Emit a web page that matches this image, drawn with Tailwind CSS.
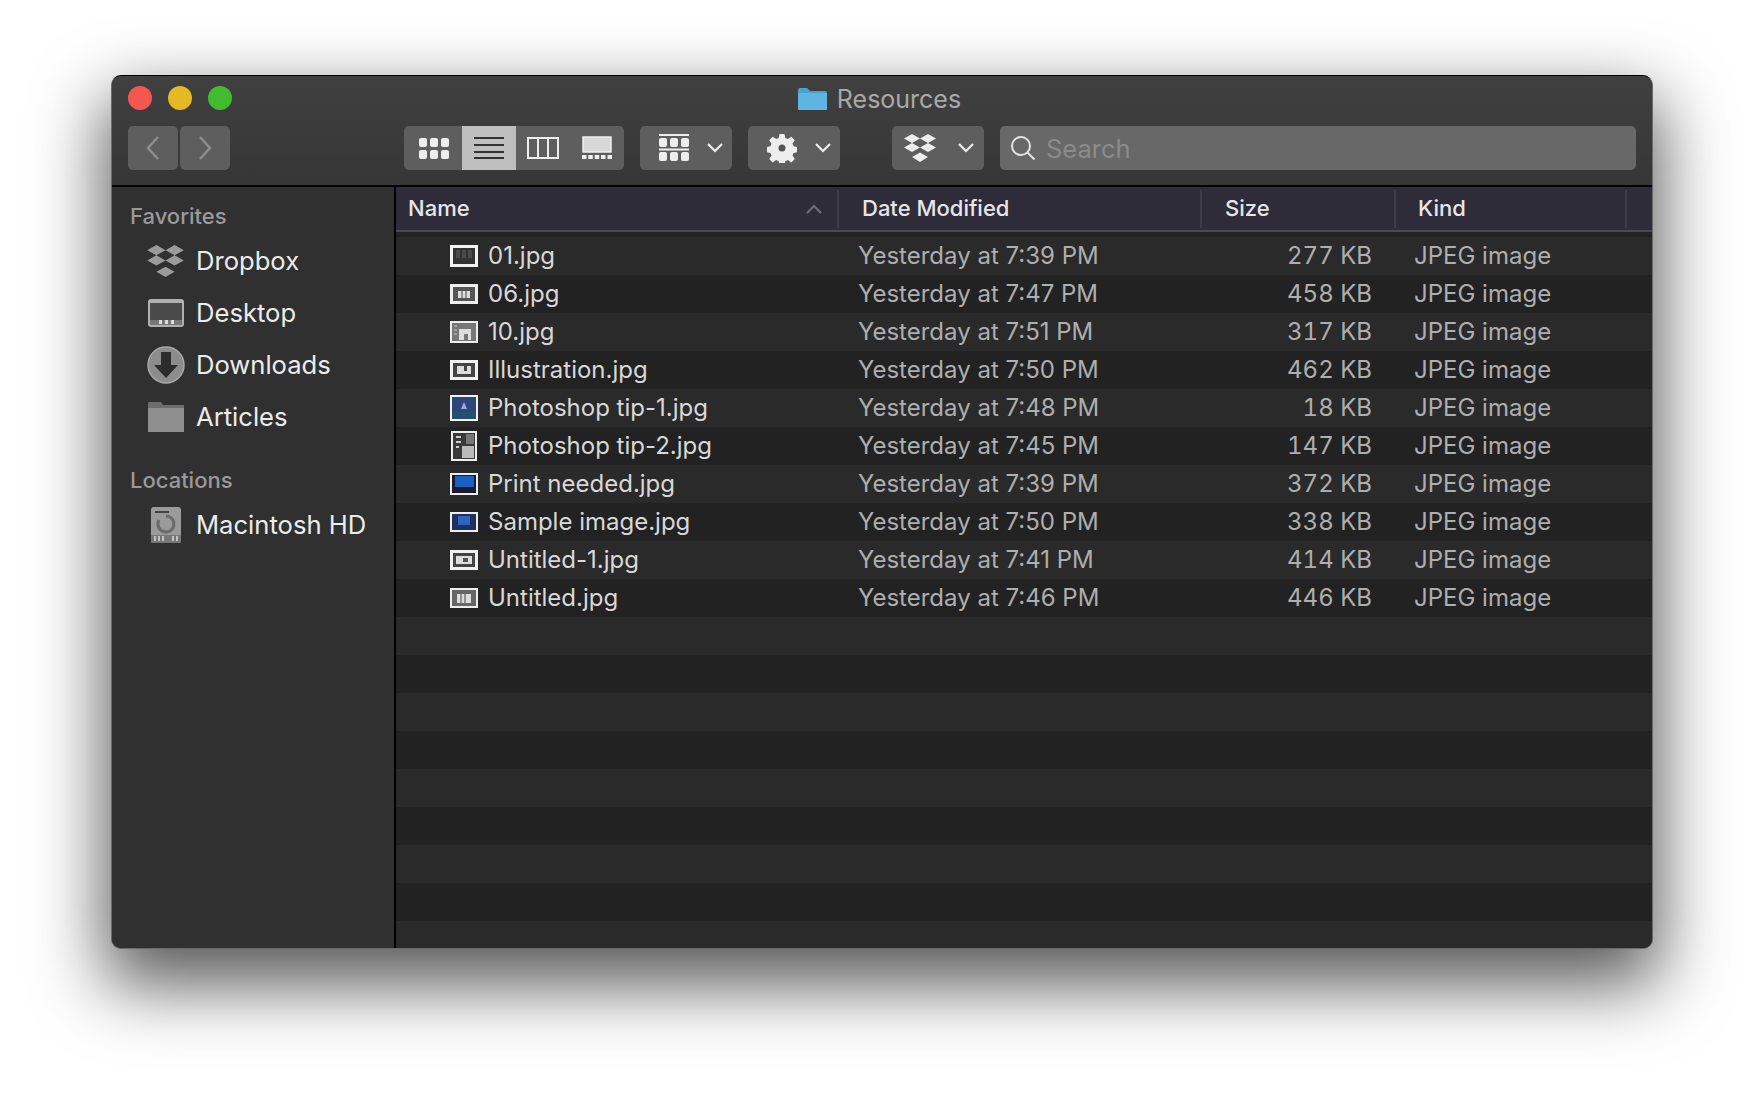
<!DOCTYPE html>
<html lang="en">
<head>
    <meta charset="UTF-8">
    <meta name="viewport" content="width=device-width, initial-scale=1.0">
    <title>Resources</title>
    <script src="https://cdn.jsdelivr.net/npm/@tailwindcss/browser@4"></script>
</head>
<body class="bg-white h-[1096px] overflow-hidden pt-[75px] pl-[111px] font-['Inter','Liberation_Sans',sans-serif]">
    <div class="w-[1542px] h-[874px] rounded-[10px] overflow-hidden flex flex-col border border-[#6a6a6a] border-t-black bg-[#303030] shadow-[0_30px_70px_6px_rgba(0,0,0,0.65)]">

        <!-- title bar and toolbar -->
        <div class="h-[111px] shrink-0 bg-gradient-to-b from-[#404040] to-[#363636] border-b-2 border-black flex flex-col">
            <div class="h-[50px] shrink-0 relative flex items-center justify-center pb-[4px]">
                <div class="absolute left-[16px] top-[10px] flex gap-[16px]">
                    <div class="w-[24px] h-[24px] rounded-full bg-[#f4574f]"></div>
                    <div class="w-[24px] h-[24px] rounded-full bg-[#e5b921]"></div>
                    <div class="w-[24px] h-[24px] rounded-full bg-[#43bb2f]"></div>
                </div>
                <div class="flex items-center gap-[9px] ml-[-6px]">
                    <svg class="w-[31px] h-[24px]" viewBox="0 0 31 24"><path d="M1 3q0-2 2-2h7q1 0 2 2l1 1h15q2 0 2 2v15q0 2-2 2H3q-2 0-2-2z" fill="#4a9fd3"/><rect x="1" y="6" width="29" height="17" rx="1" fill="#5fb4e2"/></svg>
                    <span class="text-[25px] leading-none text-[#a9a9a9]">Resources</span>
                </div>
            </div>
            <div class="flex items-start pl-[16px] pr-[16px]">
                <div class="flex gap-[2px] w-[276px]">
                    <div class="w-[50px] h-[44px] rounded-[5px] bg-[#5e5e5e] flex items-center justify-center">
                        <svg class="w-[16px] h-[26px]" viewBox="0 0 16 26" fill="none" stroke="#8e8e8e" stroke-width="2.4"><path d="M13 2 3 13l10 11"/></svg>
                    </div>
                    <div class="w-[50px] h-[44px] rounded-[5px] bg-[#5e5e5e] flex items-center justify-center">
                        <svg class="w-[16px] h-[26px]" viewBox="0 0 16 26" fill="none" stroke="#8e8e8e" stroke-width="2.4"><path d="m3 2 10 11L3 24"/></svg>
                    </div>
                </div>
                <div class="w-[220px] h-[44px] rounded-[5px] bg-[#5e5e5e] flex overflow-hidden">
                    <div class="w-[58px] flex items-center justify-center pl-[2px]">
                        <svg class="w-[30px] h-[24px]" viewBox="0 0 30 24" fill="#eee"><rect width="8" height="9" y="2" rx="2"/><rect x="11" width="8" height="9" y="2" rx="2"/><rect x="22" width="8" height="9" y="2" rx="2"/><rect width="8" height="9" y="14" rx="2"/><rect x="11" width="8" height="9" y="14" rx="2"/><rect x="22" width="8" height="9" y="14" rx="2"/></svg>
                    </div>
                    <div class="w-[54px] bg-[#bfbfbf] flex items-center justify-center">
                        <svg class="w-[30px] h-[24px]" viewBox="0 0 30 24" stroke="#333" stroke-width="2"><path d="M0 2h30M0 9h30M0 16h30M0 22h30"/></svg>
                    </div>
                    <div class="w-[54px] flex items-center justify-center">
                        <svg class="w-[32px] h-[22px]" viewBox="0 0 32 22" fill="none" stroke="#eee" stroke-width="2"><rect x="1" y="1" width="30" height="20"/><path d="M11 1v20M21 1v20"/></svg>
                    </div>
                    <div class="w-[54px] flex items-center justify-center">
                        <svg class="w-[30px] h-[24px]" viewBox="0 0 30 24"><rect x="1" y="1" width="28" height="15" fill="#d8d8d8" stroke="#eee" stroke-width="1.5"/><g fill="#eee"><rect y="19" width="4.5" height="4"/><rect x="6.3" y="19" width="4.5" height="4"/><rect x="12.7" y="19" width="4.5" height="4"/><rect x="19" y="19" width="4.5" height="4"/><rect x="25.5" y="19" width="4.5" height="4"/></g></svg>
                    </div>
                </div>
                <div class="w-[92px] h-[44px] ml-[16px] rounded-[5px] bg-[#5e5e5e] flex items-center pl-[19px] gap-[18px]">
                    <svg class="w-[30px] h-[30px]" viewBox="0 0 30 30" fill="#eee"><rect y="1" width="30" height="2"/><rect y="5" width="8" height="9" rx="2"/><rect x="11" y="5" width="8" height="9" rx="2"/><rect x="22" y="5" width="8" height="9" rx="2"/><rect y="15.5" width="30" height="2"/><rect y="19" width="8" height="9" rx="2"/><rect x="11" y="19" width="8" height="9" rx="2"/><rect x="22" y="19" width="8" height="9" rx="2"/></svg>
                    <svg class="w-[16px] h-[10px]" viewBox="0 0 16 10" fill="none" stroke="#eee" stroke-width="2.2"><path d="m1 1 7 7 7-7"/></svg>
                </div>
                <div class="w-[92px] h-[44px] ml-[16px] rounded-[5px] bg-[#5e5e5e] flex items-center pl-[19px] gap-[18px]">
                    <svg class="w-[30px] h-[30px]" viewBox="0 0 30 30"><path fill="#eee" d="M12.5 1h5l.8 4 2.6 1.100 3.400-2.300 3.500 3.500-2.300 3.400 1.100 2.600 4 .8v5l-4 .8-1.100 2.600 2.300 3.400-3.500 3.500-3.400-2.300-2.600 1.100-.8 4h-5l-.8-4-2.600-1.100-3.400 2.300-3.500-3.500 2.300-3.400-1.100-2.600-4-.8v-5l4-.8 1.100-2.600-2.300-3.400 3.500-3.500 3.400 2.300 2.600-1.100z"/><circle cx="15" cy="15" r="3.500" fill="#555"/></svg>
                    <svg class="w-[16px] h-[10px]" viewBox="0 0 16 10" fill="none" stroke="#eee" stroke-width="2.2"><path d="m1 1 7 7 7-7"/></svg>
                </div>
                <div class="w-[92px] h-[44px] ml-[52px] rounded-[5px] bg-[#5e5e5e] flex items-center pl-[12px] gap-[22px]">
                    <svg class="w-[32px] h-[28px]" viewBox="0 0 32 28" fill="#eee"><path d="m8 0 8 4.500L8 9 0 4.500zM24 0l8 4.500L24 9l-8-4.500zM8 9l8 4.500L8 18l-8-4.500zM24 9l8 4.500L24 18l-8-4.500zM16 18.500l8 4.500-8 5-8-5z"/></svg>
                    <svg class="w-[16px] h-[10px]" viewBox="0 0 16 10" fill="none" stroke="#eee" stroke-width="2.2"><path d="m1 1 7 7 7-7"/></svg>
                </div>
                <div class="flex-1 h-[44px] ml-[16px] rounded-[5px] bg-[#686868] flex items-center pl-[10px] gap-[10px]">
                    <svg class="w-[26px] h-[26px]" viewBox="0 0 26 26" fill="none" stroke="#e4e4e4" stroke-width="2"><circle cx="11" cy="11" r="9"/><path d="m17.500 17.500 7 7"/></svg>
                    <span class="text-[25.5px] leading-none text-[#8b8b8b] pt-[2px]">Search</span>
                </div>
            </div>
        </div>

        <div class="flex-1 flex min-h-0">
            <!-- sidebar -->
            <div class="w-[284px] shrink-0 bg-[#303030] border-r-2 border-black pt-[16px] pl-[18px]">
                <div class="text-[22px] leading-[26px] font-medium text-[#9a9a9a]">Favorites</div>
                <div class="mt-[13px] flex flex-col gap-[14px]">
                    <div class="h-[38px] flex items-center gap-[11px] pl-[17px]">
                        <svg class="w-[37px] h-[32px]" viewBox="0 0 32 28" fill="#9b9b9b"><path d="m8 0 8 4.500L8 9 0 4.500zM24 0l8 4.500L24 9l-8-4.500zM8 9l8 4.500L8 18l-8-4.500zM24 9l8 4.500L24 18l-8-4.500zM16 19l8 4.500-8 4.500-8-4.500z"/></svg>
                        <span class="text-[25.600px] leading-none text-[#ececec] ml-[1px]">Dropbox</span>
                    </div>
                    <div class="h-[38px] flex items-center gap-[11px] pl-[17px]">
                        <svg class="w-[38px] h-[30px]" viewBox="0 0 38 30"><rect x="1" y="1" width="36" height="28" rx="3" fill="#b0b0b0"/><rect x="3" y="5" width="32" height="17" fill="#4a4a4a"/><rect x="3" y="22" width="32" height="5" fill="#777"/><g fill="#ddd"><rect x="12" y="22" width="3" height="4"/><rect x="18" y="22" width="3" height="4"/><rect x="24" y="22" width="3" height="4"/></g></svg>
                        <span class="text-[25.600px] leading-none text-[#ececec]">Desktop</span>
                    </div>
                    <div class="h-[38px] flex items-center gap-[11px] pl-[17px]">
                        <svg class="w-[38px] h-[38px]" viewBox="0 0 38 38"><circle cx="19" cy="19" r="18" fill="#8c8c8c" stroke="#a8a8a8" stroke-width="1.500"/><path d="M14 6h10v13h7L19 32 7 19h7z" fill="#2c2c2c"/></svg>
                        <span class="text-[25.600px] leading-none text-[#ececec]">Downloads</span>
                    </div>
                    <div class="h-[38px] flex items-center gap-[11px] pl-[17px]">
                        <svg class="w-[38px] h-[32px]" viewBox="0 0 38 32"><path d="M1 2q0-1 1-1h12l2 3h21v6H1z" fill="#6d6d6d"/><rect x="1" y="7" width="36" height="24" fill="#8f8f8f"/></svg>
                        <span class="text-[25.600px] leading-none text-[#ececec]">Articles</span>
                    </div>
                </div>
                <div class="text-[22px] leading-[26px] font-medium text-[#9a9a9a] mt-[31px]">Locations</div>
                <div class="mt-[13px] flex items-center h-[38px] gap-[11px] pl-[17px]">
                    <svg class="w-[38px] h-[38px]" viewBox="0 0 38 38"><rect x="4" y="1" width="30" height="36" rx="3" fill="#9a9a9a"/><rect x="8" y="5" width="14" height="2" fill="#444"/><path d="M19 10a8 8 0 1 1-7 4" fill="none" stroke="#6b6b6b" stroke-width="3"/><rect x="4" y="29" width="30" height="8" rx="1" fill="#777"/><path d="M8 30v5M12 30v5M16 30v5M26 30v5M30 30v5" stroke="#ddd" stroke-width="1.500"/></svg>
                    <span class="text-[25.600px] leading-none text-[#ececec]">Macintosh HD</span>
                </div>
            </div>

            <!-- file list -->
            <div class="flex-1 flex flex-col bg-[#222222] min-w-0">
                <div class="h-[45px] shrink-0 bg-[#2e2c38] border-b-2 border-[#4a4954] flex items-center text-[22px] font-medium text-[#e6e6ea]">
                    <div class="w-[443px] h-[38px] shrink-0 flex items-center justify-between pl-[12px] pr-[15px] border-r-2 border-[#3d3c47]">
                        <span>Name</span>
                        <svg class="w-[16px] h-[10px]" viewBox="0 0 16 10" fill="none" stroke="#6d6c75" stroke-width="2.200"><path d="m1 9 7-7 7 7"/></svg>
                    </div>
                    <div class="w-[363px] h-[38px] shrink-0 flex items-center pl-[23px] border-r-2 border-[#3d3c47]">Date Modified</div>
                    <div class="w-[194px] h-[38px] shrink-0 flex items-center pl-[23px] border-r-2 border-[#3d3c47]">Size</div>
                    <div class="w-[231px] h-[38px] shrink-0 flex items-center pl-[22px] border-r-2 border-[#3d3c47]">Kind</div>
                </div>
                <div class="flex-1 overflow-hidden pt-[5px] flex flex-col text-[24px] text-[#aeaeae]">
                    <div class="h-[38px] shrink-0 bg-[#2a2a2a] flex items-center pl-[54px]">
                        <svg class="w-[28px] h-[22px] shrink-0" viewBox="0 0 28 22"><rect x="1.500" y="1.500" width="25" height="19" fill="#333" stroke="#f2f2f2" stroke-width="3"/><rect x="6" y="5" width="4" height="8" fill="#4a4a4a"/><rect x="12" y="5" width="4" height="8" fill="#4a4a4a"/><rect x="18" y="5" width="4" height="8" fill="#4a4a4a"/></svg>
                        <span class="w-[380px] pl-[10px] shrink-0 text-[#d8d8d8]">01.jpg</span>
                        <span class="w-[255px] shrink-0">Yesterday at 7:39 PM</span>
                        <span class="w-[259px] shrink-0 text-right tabular-nums">277 KB</span>
                        <span class="pl-[42px]">JPEG image</span>
                    </div>
                    <div class="h-[38px] shrink-0 bg-[#222222] flex items-center pl-[54px]">
                        <svg class="w-[28px] h-[20px] shrink-0" viewBox="0 0 28 20"><rect x="1.500" y="1.500" width="25" height="17" fill="#555" stroke="#eee" stroke-width="3"/><rect x="8" y="7" width="12" height="7" fill="#ddd"/><path d="M12 7v7M16 7v7" stroke="#444" stroke-width="1"/></svg>
                        <span class="w-[380px] pl-[10px] shrink-0 text-[#d8d8d8]">06.jpg</span>
                        <span class="w-[255px] shrink-0">Yesterday at 7:47 PM</span>
                        <span class="w-[259px] shrink-0 text-right tabular-nums">458 KB</span>
                        <span class="pl-[42px]">JPEG image</span>
                    </div>
                    <div class="h-[38px] shrink-0 bg-[#2a2a2a] flex items-center pl-[54px]">
                        <svg class="w-[28px] h-[22px] shrink-0" viewBox="0 0 28 22"><rect x="1" y="1" width="26" height="20" fill="#777" stroke="#eee" stroke-width="2"/><path d="M9 19V8h12v11h-3v-6h-4v6z" fill="#ddd"/><path d="M4 5h3M4 9h3M4 13h3" stroke="#ccc"/></svg>
                        <span class="w-[380px] pl-[10px] shrink-0 text-[#d8d8d8]">10.jpg</span>
                        <span class="w-[255px] shrink-0">Yesterday at 7:51 PM</span>
                        <span class="w-[259px] shrink-0 text-right tabular-nums">317 KB</span>
                        <span class="pl-[42px]">JPEG image</span>
                    </div>
                    <div class="h-[38px] shrink-0 bg-[#222222] flex items-center pl-[54px]">
                        <svg class="w-[28px] h-[20px] shrink-0" viewBox="0 0 28 20"><rect x="1.500" y="1.500" width="25" height="17" fill="#444" stroke="#f2f2f2" stroke-width="3"/><rect x="7" y="6" width="14" height="8" fill="#ddd"/><path d="M14 6v5h3V6" fill="#444"/></svg>
                        <span class="w-[380px] pl-[10px] shrink-0 text-[#d8d8d8]">Illustration.jpg</span>
                        <span class="w-[255px] shrink-0">Yesterday at 7:50 PM</span>
                        <span class="w-[259px] shrink-0 text-right tabular-nums">462 KB</span>
                        <span class="pl-[42px]">JPEG image</span>
                    </div>
                    <div class="h-[38px] shrink-0 bg-[#2a2a2a] flex items-center pl-[54px]">
                        <svg class="w-[28px] h-[26px] shrink-0" viewBox="0 0 28 26"><rect x="1" y="1" width="26" height="24" fill="#2c4678" stroke="#f2f2f2" stroke-width="2"/><path d="M14 7l3 7h-6z" fill="#8fb0d8"/><rect x="2" y="17" width="24" height="7" fill="#264f6d"/></svg>
                        <span class="w-[380px] pl-[10px] shrink-0 text-[#d8d8d8]">Photoshop tip-1.jpg</span>
                        <span class="w-[255px] shrink-0">Yesterday at 7:48 PM</span>
                        <span class="w-[259px] shrink-0 text-right tabular-nums">18 KB</span>
                        <span class="pl-[42px]">JPEG image</span>
                    </div>
                    <div class="h-[38px] shrink-0 bg-[#222222] flex items-center pl-[54px]">
                        <svg class="w-[26px] h-[30px] shrink-0 mx-[1px]" viewBox="0 0 26 30"><rect x="1" y="1" width="24" height="28" fill="#3a3a3a" stroke="#eee" stroke-width="2"/><rect x="15" y="3" width="8" height="10" fill="#777"/><rect x="11" y="15" width="12" height="12" fill="#bbb"/><path d="M5 6h5M5 11h5M5 16h3" stroke="#ccc" stroke-width="2"/></svg>
                        <span class="w-[380px] pl-[10px] shrink-0 text-[#d8d8d8]">Photoshop tip-2.jpg</span>
                        <span class="w-[255px] shrink-0">Yesterday at 7:45 PM</span>
                        <span class="w-[259px] shrink-0 text-right tabular-nums">147 KB</span>
                        <span class="pl-[42px]">JPEG image</span>
                    </div>
                    <div class="h-[38px] shrink-0 bg-[#2a2a2a] flex items-center pl-[54px]">
                        <svg class="w-[28px] h-[22px] shrink-0" viewBox="0 0 28 22"><rect x="1" y="1" width="26" height="20" fill="#1c1a2c" stroke="#eee" stroke-width="2"/><rect x="5" y="3" width="19" height="11" fill="#1c5fc4"/></svg>
                        <span class="w-[380px] pl-[10px] shrink-0 text-[#d8d8d8]">Print needed.jpg</span>
                        <span class="w-[255px] shrink-0">Yesterday at 7:39 PM</span>
                        <span class="w-[259px] shrink-0 text-right tabular-nums">372 KB</span>
                        <span class="pl-[42px]">JPEG image</span>
                    </div>
                    <div class="h-[38px] shrink-0 bg-[#222222] flex items-center pl-[54px]">
                        <svg class="w-[28px] h-[20px] shrink-0" viewBox="0 0 28 20"><rect x="1" y="1" width="26" height="18" fill="#1e2f5e" stroke="#eee" stroke-width="2"/><rect x="8" y="4" width="12" height="9" fill="#2a66c0"/></svg>
                        <span class="w-[380px] pl-[10px] shrink-0 text-[#d8d8d8]">Sample image.jpg</span>
                        <span class="w-[255px] shrink-0">Yesterday at 7:50 PM</span>
                        <span class="w-[259px] shrink-0 text-right tabular-nums">338 KB</span>
                        <span class="pl-[42px]">JPEG image</span>
                    </div>
                    <div class="h-[38px] shrink-0 bg-[#2a2a2a] flex items-center pl-[54px]">
                        <svg class="w-[28px] h-[20px] shrink-0" viewBox="0 0 28 20"><rect x="1.500" y="1.500" width="25" height="17" fill="#444" stroke="#f2f2f2" stroke-width="3"/><rect x="6" y="6" width="16" height="8" fill="#ddd"/><rect x="13" y="8" width="5" height="4" fill="#555"/></svg>
                        <span class="w-[380px] pl-[10px] shrink-0 text-[#d8d8d8]">Untitled-1.jpg</span>
                        <span class="w-[255px] shrink-0">Yesterday at 7:41 PM</span>
                        <span class="w-[259px] shrink-0 text-right tabular-nums">414 KB</span>
                        <span class="pl-[42px]">JPEG image</span>
                    </div>
                    <div class="h-[38px] shrink-0 bg-[#222222] flex items-center pl-[54px]">
                        <svg class="w-[28px] h-[20px] shrink-0" viewBox="0 0 28 20"><rect x="1" y="1" width="26" height="18" fill="#666" stroke="#eee" stroke-width="2"/><rect x="7" y="6" width="14" height="9" fill="#ddd"/><path d="M11 6v9M15 6v9" stroke="#444"/></svg>
                        <span class="w-[380px] pl-[10px] shrink-0 text-[#d8d8d8]">Untitled.jpg</span>
                        <span class="w-[255px] shrink-0">Yesterday at 7:46 PM</span>
                        <span class="w-[259px] shrink-0 text-right tabular-nums">446 KB</span>
                        <span class="pl-[42px]">JPEG image</span>
                    </div>
                    <div class="h-[38px] shrink-0 bg-[#2a2a2a]"></div>
                    <div class="h-[38px] shrink-0 bg-[#222222]"></div>
                    <div class="h-[38px] shrink-0 bg-[#2a2a2a]"></div>
                    <div class="h-[38px] shrink-0 bg-[#222222]"></div>
                    <div class="h-[38px] shrink-0 bg-[#2a2a2a]"></div>
                    <div class="h-[38px] shrink-0 bg-[#222222]"></div>
                    <div class="h-[38px] shrink-0 bg-[#2a2a2a]"></div>
                    <div class="h-[38px] shrink-0 bg-[#222222]"></div>
                    <div class="h-[38px] shrink-0 bg-[#2a2a2a]"></div>
                </div>
            </div>
        </div>
    </div>
</body>
</html>
